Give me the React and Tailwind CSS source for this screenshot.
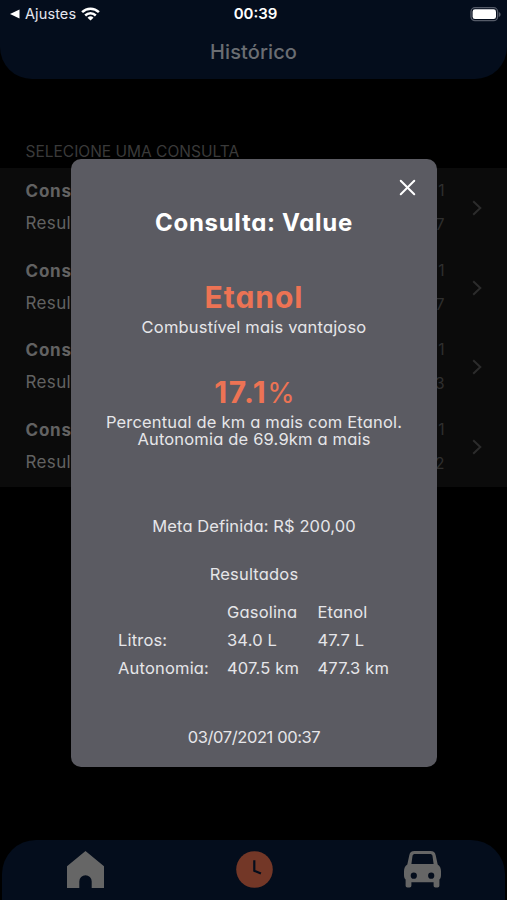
import { X } from "lucide-react";

const rows = [
  { title: "Consulta: Value", result: "Resultado: Etanol", date: "03/07/2021", percent: "17" },
  { title: "Consulta: Value", result: "Resultado: Etanol", date: "03/07/2021", percent: "17" },
  { title: "Consulta: Value", result: "Resultado: Etanol", date: "03/07/2021", percent: "13" },
  { title: "Consulta: Value", result: "Resultado: Etanol", date: "03/07/2021", percent: "12" },
];

const results = [
  ["", "Gasolina", "Etanol"],
  ["Litros:", "34.0 L", "47.7 L"],
  ["Autonomia:", "407.5 km", "477.3 km"],
];

function StatusBar() {
  return (
    <div className="grid h-7 grid-cols-3 items-center pl-2.5 pr-[6px] text-[15px] text-white">
      <div className="flex items-center">
        <svg width="10" height="10" viewBox="0 0 10 10" fill="#fff"><path d="M0 5 9.5 .6v8.8z" /></svg>
        <span className="ml-[5px] text-[14.5px] tracking-[0.1px] text-[#e4e8f0]">Ajustes</span>
        <svg className="ml-[5px]" width="19" height="14" viewBox="0 0 19 14" fill="none" stroke="#fff" strokeWidth="2.5">
          <path d="M1.1 5.1a12 12 0 0 1 16.8 0M4.2 8.5a7.6 7.6 0 0 1 10.6 0" />
          <path d="M9.5 13.6 6.5 10.7a4.3 4.3 0 0 1 6 0z" fill="#fff" stroke="none" />
        </svg>
      </div>
      <div className="text-center font-semibold">00:39</div>
      <svg className="justify-self-end" width="31" height="15" viewBox="0 0 31 15">
        <rect x="1" y=".7" width="26.6" height="13" rx="4" fill="none" stroke="#555b68" strokeWidth="1.3" />
        <rect x="2.6" y="2.3" width="23.4" height="9.8" rx="2.4" fill="#fff" />
        <path d="M28.8 5v5c1.1-.4 1.8-1.4 1.8-2.5s-.7-2.1-1.8-2.5z" fill="#555b68" />
      </svg>
    </div>
  );
}

function Row({ title, result, date, percent }) {
  return (
    <div className="flex h-[79.5px] items-start pl-[25.5px] pr-[25px] pt-3">
      <div className="flex-1 text-[17px] text-[#626262]">
        <div className="h-[22px] font-bold leading-[22px] tracking-[0.8px]">{title}</div>
        <div className="mt-2.5 h-[22px] leading-[22px] tracking-[0.35px]">{result}</div>
      </div>
      <div className="mr-[26px] text-right text-[15.5px] tracking-[1.5px] text-[#2f2f2f]">
        <div className="h-[22px] leading-[22px]">{date}</div>
        <div className="mt-3 h-[22px] leading-[22px]">{percent}</div>
      </div>
      <svg className="mt-5" width="10" height="16" viewBox="0 0 10 16" fill="none" stroke="#2c2c2c" strokeWidth="2">
        <path d="m1.2 1.2 7.1 6.8-7.1 6.8" />
      </svg>
    </div>
  );
}

function Modal() {
  return (
    <div className="absolute left-[71px] top-[158.5px] h-[608.5px] w-[366px] rounded-[10px] bg-[#5b5b62] text-center text-[16.5px] tracking-[0.18px] text-[#e6e6e9]">
      <div className="flex justify-end pr-[16.5px] pt-[15px]">
        <X size={27} strokeWidth={1.8} color="#fff" />
      </div>
      <h2 className="mt-1.5 h-8 text-[24px] font-bold leading-8 tracking-[0.7px] text-white">Consulta: Value</h2>

      <div className="mt-[41px] h-[34px] text-[30px] font-bold leading-[34px] tracking-[1px] text-[#ed7354]">Etanol</div>
      <p className="mt-1 h-[18px] leading-[18px]">Combustível mais vantajoso</p>

      <div className="mt-[39px] h-[34px] text-[30px] font-bold leading-[34px] text-[#ed7354]">
        <span className="tracking-[1.5px]">17.1</span>
        <span className="text-[28px] font-normal tracking-[-1px]">%</span>
      </div>
      <p className="mt-[5px] leading-[17px]">
        Percentual de km a mais com Etanol.
        <br />
        Autonomia de 69.9km a mais
      </p>

      <p className="mt-[69px] h-[18px] leading-[18px] tracking-[0.1px]">Meta Definida: R$ 200,00</p>
      <p className="mt-[30px] h-[18px] leading-[18px]">Resultados</p>
      <div className="mt-[15px] grid grid-cols-[109px_90.5px_auto] pl-[47px] text-left leading-7">
        {results.flat().map((cell, i) => (
          <div key={i} className="h-7 whitespace-nowrap">{cell}</div>
        ))}
      </div>
      <p className="mt-[46px] h-[18px] leading-[18px] tracking-[-0.4px]">03/07/2021 00:37</p>
    </div>
  );
}

export default function App() {
  return (
    <div className="relative flex h-[900px] w-[507px] flex-col overflow-hidden bg-black font-['Inter',sans-serif] [font-feature-settings:'cv11'_1]">
      <header className="h-[78.5px] rounded-b-[32px] bg-[#040d1c]">
        <StatusBar />
        <h1 className="mt-[11px] text-center text-[20px] font-medium leading-[26px] tracking-[0.1px] text-[#6a6d72] [font-feature-settings:normal]">Histórico</h1>
      </header>

      <main className="flex-1">
        <div className="mt-[61.5px] h-[22px] pl-[25.5px] pt-px text-[15.5px] leading-[22px] text-[#3a3a3a]">SELECIONE UMA CONSULTA</div>
        <div className="mt-[6px] h-[319px] bg-[#0b0b0b]">
          {rows.map((r, i) => <Row key={i} {...r} />)}
        </div>
      </main>

      <nav className="mx-[2px] flex h-[60px] justify-between rounded-t-[34px] bg-[#040d1c] pl-[65px] pr-[64px] pt-[11px]">
        <svg width="37" height="37" viewBox="0 0 37 37" fill="#666">
          <path d="M18.5 0 37 15.2V37H24.7V30.5a6.2 6.2 0 0 0-12.4 0V37H0V15.2z" />
        </svg>
        <svg width="37" height="37" viewBox="0 0 37 37" fill="none">
          <circle cx="18.5" cy="18.5" r="18.3" fill="#733727" />
          <path d="M18.3 9.2v10.5l6.600 2.900" stroke="#040d1c" strokeWidth="2.2" />
        </svg>
        <svg width="37" height="37" viewBox="0 0 37 37" fill="#666">
          <path fillRule="evenodd" d="M10.500 0h16c3 0 4.600 1.400 5.200 4.200L33.700 13.500c2.200 1.500 3.300 3.800 3.300 6.700v3.800c0 2-.5 3.500-1.600 4.600V34.500c0 1.200-.7 1.900-1.900 1.900h-2c-1.200 0-1.900-.7-1.900-1.900V31.200H7.400V34.500c0 1.200-.7 1.900-1.900 1.900h-2c-1.200 0-1.900-.7-1.900-1.900V28.600C.5 27.500 0 26 0 24v-3.800c0-2.900 1.100-5.200 3.300-6.700l2-9.300C5.900 1.400 7.500 0 10.500 0zM11.300 3c-1.700 0-2.500.6-2.800 2L7.400 13h22.200L28.500 5c-.3-1.400-1.100-2-2.800-2zM9.800 21.600a3.100 3.100 0 1 0 0 6.200 3.100 3.100 0 0 0 0-6.200zM27.200 21.600a3.100 3.100 0 1 0 0 6.200 3.100 3.100 0 0 0 0-6.200z" />
        </svg>
      </nav>

      <Modal />
    </div>
  );
}
